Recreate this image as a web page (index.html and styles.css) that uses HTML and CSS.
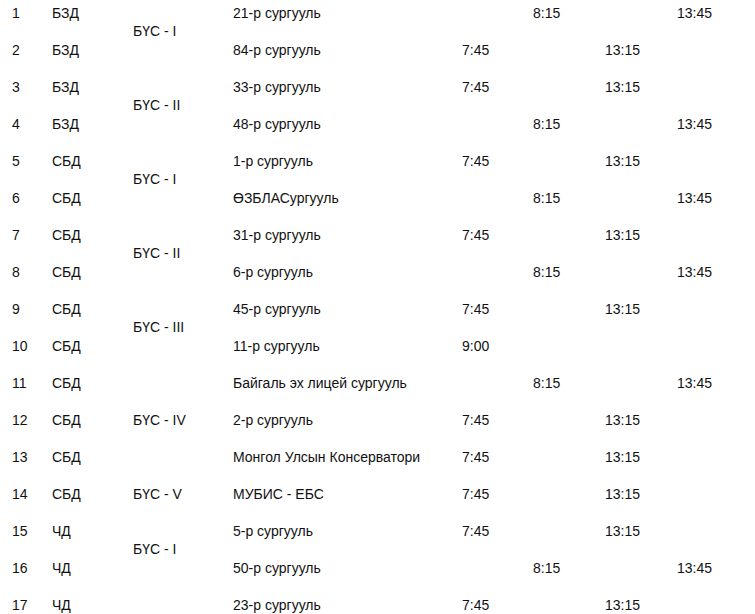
FILE: index.html
```html
<!DOCTYPE html>
<html lang="mn">
<head>
<meta charset="utf-8">
<title>Хуваарь</title>
<link rel="stylesheet" href="styles.css">
</head>
<body>
<table class="schedule">
  <colgroup>
    <col class="c-no"><col class="c-type"><col class="c-zone"><col class="c-school">
    <col class="c-t"><col class="c-t"><col class="c-t"><col class="c-last">
  </colgroup>
  <tbody>
    <tr><td>1</td><td>БЗД</td><td rowspan="2">БҮС - I</td><td>21-р сургууль</td><td></td><td>8:15</td><td></td><td>13:45</td></tr>
    <tr><td>2</td><td>БЗД</td><td>84-р сургууль</td><td>7:45</td><td></td><td>13:15</td><td></td></tr>
    <tr><td>3</td><td>БЗД</td><td rowspan="2">БҮС - II</td><td>33-р сургууль</td><td>7:45</td><td></td><td>13:15</td><td></td></tr>
    <tr><td>4</td><td>БЗД</td><td>48-р сургууль</td><td></td><td>8:15</td><td></td><td>13:45</td></tr>
    <tr><td>5</td><td>СБД</td><td rowspan="2">БҮС - I</td><td>1-р сургууль</td><td>7:45</td><td></td><td>13:15</td><td></td></tr>
    <tr><td>6</td><td>СБД</td><td>ӨЗБЛАСургууль</td><td></td><td>8:15</td><td></td><td>13:45</td></tr>
    <tr><td>7</td><td>СБД</td><td rowspan="2">БҮС - II</td><td>31-р сургууль</td><td>7:45</td><td></td><td>13:15</td><td></td></tr>
    <tr><td>8</td><td>СБД</td><td>6-р сургууль</td><td></td><td>8:15</td><td></td><td>13:45</td></tr>
    <tr><td>9</td><td>СБД</td><td rowspan="2">БҮС - III</td><td>45-р сургууль</td><td>7:45</td><td></td><td>13:15</td><td></td></tr>
    <tr><td>10</td><td>СБД</td><td>11-р сургууль</td><td>9:00</td><td></td><td></td><td></td></tr>
    <tr><td>11</td><td>СБД</td><td rowspan="3">БҮС - IV</td><td>Байгаль эх лицей сургууль</td><td></td><td>8:15</td><td></td><td>13:45</td></tr>
    <tr><td>12</td><td>СБД</td><td>2-р сургууль</td><td>7:45</td><td></td><td>13:15</td><td></td></tr>
    <tr><td>13</td><td>СБД</td><td>Монгол Улсын Консерватори</td><td>7:45</td><td></td><td>13:15</td><td></td></tr>
    <tr><td>14</td><td>СБД</td><td>БҮС - V</td><td>МУБИС - ЕБС</td><td>7:45</td><td></td><td>13:15</td><td></td></tr>
    <tr><td>15</td><td>ЧД</td><td rowspan="2">БҮС - I</td><td>5-р сургууль</td><td>7:45</td><td></td><td>13:15</td><td></td></tr>
    <tr><td>16</td><td>ЧД</td><td>50-р сургууль</td><td></td><td>8:15</td><td></td><td>13:45</td></tr>
    <tr><td>17</td><td>ЧД</td><td></td><td>23-р сургууль</td><td>7:45</td><td></td><td>13:15</td><td></td></tr>
  </tbody>
</table>
</body>
</html>
```

FILE: styles.css
```css
html, body {
  margin: 0;
  padding: 0;
  background: #fff;
}

body {
  font-family: "Liberation Sans", Arial, sans-serif;
  font-size: 14px;
  color: #111;
  overflow: hidden;
}

.schedule {
  border-collapse: collapse;
  table-layout: fixed;
  width: 735px;
  margin: -6px 0 0 12px;
}

.schedule td {
  padding: 0;
  height: 37px;
  vertical-align: middle;
  text-align: left;
  white-space: nowrap;
  line-height: 16px;
}

.c-no { width: 40px; }
.c-type { width: 81px; }
.c-zone { width: 100px; }
.c-school { width: 229px; }
.c-t { width: 71px; }
.schedule col.c-t + col.c-t { width: 72px; }
.c-last { width: 70px; }
```
